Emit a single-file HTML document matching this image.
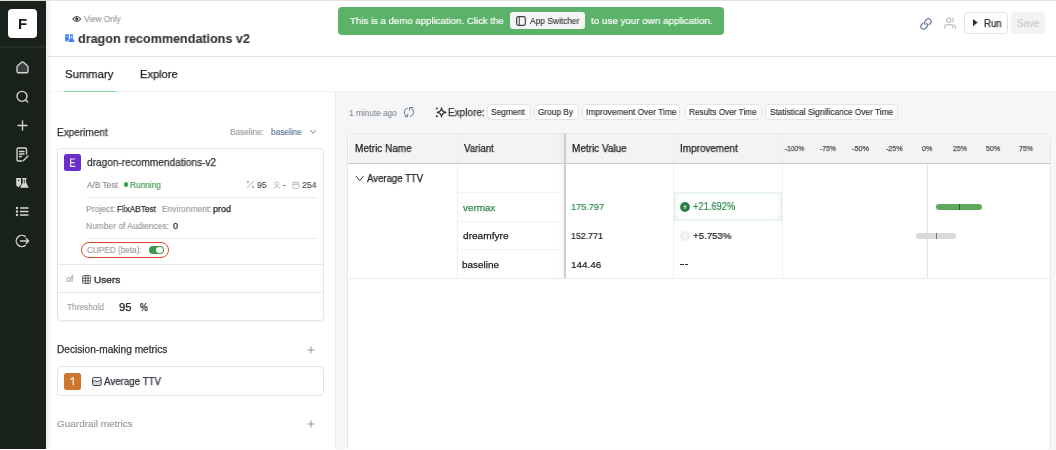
<!DOCTYPE html>
<html><head><meta charset="utf-8">
<style>
*{box-sizing:border-box;margin:0;padding:0}
html,body{width:1056px;height:450px;overflow:hidden;background:#fff;font-family:"Liberation Sans",sans-serif;color:#222}
.a{position:absolute;white-space:nowrap}
.t{position:absolute;white-space:nowrap;line-height:1;will-change:transform;-webkit-text-stroke:.25px currentColor}
#topline{left:0;top:0;width:1056px;height:1px;background:#e3e3e3}
#side{left:0;top:1px;width:45.6px;height:449px;background:#19211b;box-shadow:2px 0 6px rgba(0,0,0,.10)}
#fbox{will-change:transform;left:8px;top:9px;width:29px;height:29px;background:#fff;border-radius:4px;color:#1a1f1c;font-weight:bold;font-size:15px;text-align:center;line-height:29px}
#sidesep{left:0;top:46.4px;width:45.6px;height:1.2px;background:#252d27}
#hdr{left:46px;top:56px;width:1010px;height:1px;background:#dce1e4}
#tabline{left:46px;top:91px;width:1010px;height:1px;background:#f0f1f3}
#lpanelborder{left:335px;top:92px;width:1px;height:358px;background:#e6e9ed}
#rpanel{left:336px;top:92px;width:720px;height:358px;background:#f5f6f8}
.card{position:absolute;background:#fff;border:1px solid #e1e5ea;border-radius:4px}
.btn{will-change:transform;-webkit-text-stroke:.2px currentColor;position:absolute;height:16.2px;margin-top:.3px;background:#fff;border:1px solid #e2e4e8;border-radius:4px;font-size:8.3px;color:#333;line-height:14px;text-align:center}
</style></head><body>
<div class="a" id="topline"></div>
<div class="a" id="side"></div>
<div class="a" id="fbox">F</div>
<div class="a" id="sidesep"></div>

<!-- sidebar icons -->
<svg class="a" style="left:0;top:50px" width="45" height="210" viewBox="0 50 45 210" fill="none" stroke="#d3d6d4" stroke-width="1.35" stroke-linecap="round" stroke-linejoin="round">
  <path d="M17 67 Q17 66.3 17.6 65.8 L21.6 62.3 Q22.5 61.6 23.4 62.3 L27.4 65.8 Q28 66.3 28 67 V71.6 Q28 72.7 26.9 72.7 H18.1 Q17 72.7 17 71.6 Z" fill="#3a403c"/>
  <circle cx="22" cy="96.3" r="5"/><path d="M25.6 99.9 L27.8 102"/>
  <path d="M22.5 121 V130 M18 125.5 H27"/>
  <path d="M26.5 154 V149.2 Q26.5 148 25.3 148 H18.2 Q17 148 17 149.2 V159.8 Q17 161 18.2 161 H22 M19.5 151.5 H24 M19.5 154 H24 M19.5 156.5 H21.5 M23.5 160.5 L28 156"/>
  <path d="M16.2 178 H21 V184.3 L18.6 187.2 L16.2 185.6 Z" fill="#d3d6d4" stroke="none"/><circle cx="18.6" cy="180.5" r=".75" fill="#19211b" stroke="none"/><path d="M22 178 H26.7 V179 H26.1 V182.6 L28.8 187.8 H20 L22.7 182.6 V179 H22 Z" fill="#d3d6d4" stroke="none"/><path d="M24.3 179.8 V183" stroke="#19211b" stroke-width=".8"/>
  <path d="M20.5 208 H28 M20.5 211.5 H28 M20.5 215 H28"/>
  <circle cx="17" cy="208" r=".5" fill="#d8dbd9"/><circle cx="17" cy="211.5" r=".5" fill="#d8dbd9"/><circle cx="17" cy="215" r=".5" fill="#d8dbd9"/>
  <path d="M25.3 236.6 A5.6 5.6 0 1 0 25.3 245.4 M20.5 241 H28.6 M26.2 238.6 L28.6 241 L26.2 243.4"/>
</svg>

<!-- header -->
<div class="a" id="hdr"></div>
<svg class="a" style="left:72px;top:15px" width="9.5" height="8" viewBox="0 0 9.5 8"><path d="M.7 4 Q4.75 -.9 8.8 4 Q4.75 8.9 .7 4Z" fill="none" stroke="#444" stroke-width="1.1"/><circle cx="4.75" cy="4" r="1.7" fill="#444"/></svg>
<svg class="a" style="left:64.5px;top:33.6px" width="10" height="8.6" viewBox="16 177.6 13 10.6" preserveAspectRatio="none"><path d="M16.2 178 H21 V184.3 L18.6 187.2 L16.2 185.6 Z" fill="#3f80ee"/><circle cx="18.6" cy="180.5" r=".8" fill="#fff"/><path d="M22 178 H26.7 V179 H26.1 V182.6 L28.8 187.8 H20 L22.7 182.6 V179 H22 Z" fill="#3f80ee"/><path d="M24.3 179.8 V183" stroke="#fff" stroke-width=".9"/></svg>

<div class="a" style="left:337.8px;top:6.6px;width:386.4px;height:28.6px;background:#5db26a;border-radius:4px"></div>
<div class="a" style="left:510px;top:12px;width:75px;height:17px;background:#f4f5f4;border-radius:3px"></div>
<svg class="a" style="left:516px;top:16px" width="10" height="10" viewBox="0 0 10 10"><rect x=".7" y=".7" width="8.6" height="8.6" rx="1.5" fill="none" stroke="#444" stroke-width="1.2"/><path d="M3.3 1V9" stroke="#444" stroke-width="1"/></svg>

<svg class="a" style="left:918.5px;top:16.5px" width="14" height="14" viewBox="0 0 14 14" fill="none" stroke="#627696" stroke-width="1.15" stroke-linecap="round"><g transform="rotate(-45 7 7)"><path d="M5.6 4.3 H3.6 A2.7 2.7 0 0 0 3.6 9.7 H5.2 A2.7 2.7 0 0 0 7.9 7"/><path d="M8.4 9.7 H10.4 A2.7 2.7 0 0 0 10.4 4.3 H8.8 A2.7 2.7 0 0 0 6.1 7"/></g></svg>
<svg class="a" style="left:943px;top:17px" width="14" height="13" viewBox="0 0 14 13" fill="none" stroke="#bcbec2" stroke-width="1.05" stroke-linecap="round"><circle cx="5.8" cy="3.2" r="2.2"/><path d="M9.2 1.2 A2.3 2.3 0 0 1 9.2 5.3"/><path d="M1.6 11.2 V10.4 A2.8 2.8 0 0 1 4.4 7.6 H7.2 A2.8 2.8 0 0 1 10 10.4 V11.2"/><path d="M10.6 7.8 A2.6 2.6 0 0 1 12.6 10.4 V11.2"/></svg>
<div class="a" style="left:964px;top:12px;width:44px;height:22px;border:1px solid #dfe3e8;border-radius:4px;background:#fff"></div>
<svg class="a" style="left:973px;top:19.2px" width="6" height="8" viewBox="0 0 6 8"><path d="M0 0 L4.7 3.6 L0 7.2Z" fill="#2d3238"/></svg>
<div class="a" style="left:1011px;top:12px;width:34px;height:22px;border-radius:4px;background:#f3f3f3"></div>

<!-- tabs -->
<div class="a" id="tabline"></div>


<!-- left panel -->
<svg class="a" style="left:309px;top:129px" width="9" height="6" viewBox="0 0 9 6"><path d="M1.4 1.2 L4.1 4.3 L6.8 1.2" fill="none" stroke="#6a7f9a" stroke-width=".95"/></svg>

<div class="card" style="left:57px;top:148px;width:266.5px;height:172.5px;box-shadow:0 1px 2px rgba(0,0,0,.05)"></div>
<div class="a" style="left:58px;top:264px;width:265px;height:1px;background:#e6e9ec"></div>
<div class="a" style="left:58px;top:292px;width:265px;height:1px;background:#e6e9ec"></div>

<div class="a" style="left:64px;top:153.5px;width:17px;height:17.3px;background:#6a2fcb;border-radius:2.5px"></div><svg class="a" style="left:64px;top:153.5px" width="17" height="17" viewBox="0 0 17 17"><path d="M11.1 5 H6.6 V12.3 H11.1 M6.6 8.6 H10.6" stroke="#ece4f8" stroke-width="1.15" fill="none"/></svg>
<div class="a" style="left:123.9px;top:182.3px;width:4.5px;height:4.5px;border-radius:50%;background:#3d9b50"></div>

<svg class="a" style="left:246px;top:180px" width="9" height="9" viewBox="0 0 9 9" fill="none" stroke="#b0b0b0" stroke-width="1" stroke-linecap="round"><path d="M1.2 7.6 L7.6 1.2"/><circle cx="1.8" cy="2" r=".7" fill="#b0b0b0"/><circle cx="6.8" cy="7" r=".7" fill="#b0b0b0"/></svg>
<svg class="a" style="left:272.5px;top:180.5px" width="8" height="8" viewBox="0 0 8 8" fill="none" stroke="#b8b8b8" stroke-width=".9"><circle cx="3.8" cy="2.7" r="1.8"/><path d="M.7 7.3 q3-3.3 6.3 0"/></svg>
<div class="a" style="left:282.8px;top:184.5px;width:3px;height:1px;background:#888"></div>
<svg class="a" style="left:291.5px;top:180.5px" width="8" height="8" viewBox="0 0 8 8" fill="none" stroke="#b8b8b8" stroke-width=".9"><rect x=".8" y="1.6" width="6.2" height="5.8" rx=".8"/><path d="M.8 3.4h6.2M2.6 .5v1.8M5.2 .5v1.8"/></svg>

<div class="a" style="left:87px;top:196.5px;width:230px;height:1px;background:#ececec"></div>
<div class="a" style="left:87px;top:238px;width:230px;height:1px;background:#ececec"></div>

<div class="a" style="left:81.4px;top:241.9px;width:87.6px;height:16px;border:1.9px solid #e2492c;border-radius:8px"></div>
<div class="a" style="left:149.4px;top:246px;width:14.6px;height:8.4px;border-radius:4.2px;background:#3e9a52"></div>
<div class="a" style="left:156.4px;top:247.1px;width:6.3px;height:6.3px;border-radius:50%;background:#fff"></div>

<svg class="a" style="left:81.5px;top:274.5px" width="9.5" height="9" viewBox="0 0 9.5 9" fill="none" stroke="#4a4f55" stroke-width=".9"><rect x=".6" y=".6" width="8.2" height="7.8" rx="1"/><path d="M.6 3.2h8.2M.6 5.8h8.2M3.3 .6v7.8M6 .6v7.8"/></svg>


<svg class="a" style="left:307px;top:346px" width="8" height="8" viewBox="0 0 8 8"><path d="M4 .6v6.8M.6 4h6.8" stroke="#858585" stroke-width=".85"/></svg>
<div class="card" style="left:57px;top:366px;width:266.5px;height:30px"></div>
<div class="a" style="left:63.8px;top:373px;width:17.1px;height:16.6px;background:#cd752c;border-radius:2.5px"></div><svg class="a" style="left:63.8px;top:373px" width="17" height="17" viewBox="0 0 17 17"><path d="M9.3 4.6 V11.7 M9.3 4.6 L6.9 6.3" stroke="#f6e9dc" stroke-width="1.35" fill="none" stroke-linecap="round" stroke-linejoin="round"/></svg>
<svg class="a" style="left:91.5px;top:377px" width="10" height="9" viewBox="0 0 10 9"><path d="M1 4.6 Q2.5 3 3.6 3.9 Q4.8 5.2 6.2 4.3 Q7.4 3.4 8.8 3.2 V8 H1Z" fill="#d5d7db"/><rect x=".6" y=".6" width="8.6" height="7.9" rx="1.3" fill="none" stroke="#3a3e44" stroke-width="1"/><path d="M1 4.6 Q2.5 3 3.6 3.9 Q4.8 5.2 6.2 4.3 Q7.4 3.4 8.8 3.2" fill="none" stroke="#3a3e44" stroke-width=".9"/></svg>

<svg class="a" style="left:307px;top:420px" width="8" height="8" viewBox="0 0 8 8"><path d="M4 .6v6.8M.6 4h6.8" stroke="#858585" stroke-width=".85"/></svg>
<div class="a" id="lpanelborder"></div>
<div class="a" id="rpanel"></div>
<div class="a" style="left:64px;top:90.8px;width:52px;height:1.5px;background:#84dc9b"></div>


<!-- right panel -->
<svg class="a" style="left:400px;top:104px" width="16" height="16" viewBox="400 104 16 16" fill="none" stroke="#6a829b" stroke-width="1.0" stroke-linecap="round" stroke-linejoin="round"><path d="M407.5 108.1 A4.4 4.4 0 0 0 406.9 116.4"/><path d="M407.7 114.1 V116.6 H405.1"/><path d="M410.3 116.5 A4.4 4.4 0 0 0 410.9 108.2"/><path d="M409.5 110.4 V107.5 H412.6"/></svg>
<svg class="a" style="left:434px;top:106px" width="14" height="13" viewBox="434 106 14 13"><path d="M441.5 107.9 Q441.9 111.9 446 112.35 Q441.9 112.8 441.5 116.8 Q441.1 112.8 437.2 112.35 Q441.1 111.9 441.5 107.9Z" fill="none" stroke="#333" stroke-width="1.2" stroke-linejoin="round"/><circle cx="436.8" cy="108.4" r="1" fill="#333"/><circle cx="436.8" cy="116.3" r="1" fill="#333"/></svg>
<div class="btn" style="left:486.6px;top:104px;width:43.5px"></div>
<div class="btn" style="left:533.5px;top:104px;width:44.5px"></div>
<div class="btn" style="left:582px;top:104px;width:98px"></div>
<div class="btn" style="left:684.5px;top:104px;width:77px"></div>
<div class="btn" style="left:765.4px;top:104px;width:132.6px"></div>

<div class="a" style="left:347px;top:133px;width:703.5px;height:330px;background:#fff;border:1px solid #e6e6e6;border-radius:6px"></div>
<div class="a" style="left:348.5px;top:134px;width:701px;height:29px;background:#f3f3f3;border-radius:5px 5px 0 0"></div>
<div class="a" style="left:456.8px;top:134px;width:1px;height:144px;background:#eeeeee"></div>
<div class="a" style="left:673.3px;top:134px;width:1px;height:144px;background:#efefef"></div>
<div class="a" style="left:782.3px;top:134px;width:1px;height:144px;background:#efefef"></div>
<div class="a" style="left:558px;top:134px;width:6px;height:144px;background:linear-gradient(90deg,rgba(0,0,0,0),rgba(0,0,0,.03))"></div>
<div class="a" style="left:564px;top:134px;width:1.6px;height:144px;background:#cdcdcd"></div>
<div class="a" style="left:348.5px;top:278px;width:701px;height:1px;background:#ececec"></div>
<div class="a" style="left:348px;top:162.6px;width:702px;height:1.4px;background:#c9c9c9"></div>
<div class="a" style="left:457.8px;top:191.5px;width:106px;height:1px;background:#f3f3f3"></div>
<div class="a" style="left:457.8px;top:220.8px;width:106px;height:1px;background:#f3f3f3"></div>
<div class="a" style="left:457.8px;top:248.8px;width:106px;height:1px;background:#f3f3f3"></div>


<svg class="a" style="left:354.5px;top:175px" width="10" height="7" viewBox="0 0 10 7"><path d="M1 1 L4.8 5.6 L8.6 1" fill="none" stroke="#333" stroke-width="1"/></svg>


<div class="a" style="left:673.8px;top:192px;width:108.6px;height:28.8px;background:#fff;border:1px solid #e4f1e4;box-shadow:inset 0 0 5px rgba(91,170,95,.18)"></div>
<svg class="a" style="left:680px;top:202px" width="10" height="10" viewBox="0 0 10 10"><circle cx="5" cy="5" r="4.9" fill="#2c8049"/><path d="M5 3 L7 5 H5.7 V7 H4.3 V5 H3Z" fill="#fff" opacity=".7"/></svg>
<svg class="a" style="left:680px;top:231px" width="10" height="10" viewBox="0 0 10 10"><circle cx="5" cy="5" r="4.6" fill="#f0f0f0" stroke="#e6e6e6" stroke-width=".7"/><path d="M5 3 L7 5 H5.7 V7 H4.3 V5 H3Z" fill="#fafafa"/></svg>
<div class="a" style="left:680.3px;top:263.5px;width:3.4px;height:1px;background:#333"></div>
<div class="a" style="left:684.8px;top:263.5px;width:3.4px;height:1px;background:#333"></div>

<div class="a" style="left:927px;top:164px;width:1px;height:114px;background:#dde3f7"></div>
<div class="a" style="left:936px;top:203.7px;width:45.7px;height:6.3px;border-radius:3.2px;background:#5fa95c"></div>
<div class="a" style="left:959.2px;top:203.7px;width:1px;height:6.3px;background:#2e5b2d"></div>
<div class="a" style="left:915.6px;top:232.7px;width:40.4px;height:6px;border-radius:3px;background:#d9d9d9"></div>
<div class="a" style="left:936px;top:232.7px;width:1px;height:6px;background:#777"></div>
<div class="t" style="left:83.90px;top:15.00px;font-size:8.78px;color:#9b9b9b;transform:scaleX(0.932);transform-origin:0 0;-webkit-text-stroke:.15px currentColor;">View Only</div>
<div class="t" style="left:78.30px;top:33.00px;font-size:12.93px;color:#36393e;font-weight:bold;transform:scaleX(0.973);transform-origin:0 0;-webkit-text-stroke:.15px currentColor;">dragon recommendations v2</div>
<div class="t" style="left:349.71px;top:16.00px;font-size:9.89px;color:#fff;transform:scaleX(0.976);transform-origin:0 0;-webkit-text-stroke:.18px #fff;">This is a demo application. Click the</div>
<div class="t" style="left:529.80px;top:17.00px;font-size:8.47px;color:#333;transform:scaleX(0.990);transform-origin:0 0;-webkit-text-stroke:.12px currentColor;">App Switcher</div>
<div class="t" style="left:591.40px;top:16.00px;font-size:9.89px;color:#fff;transform:scaleX(0.994);transform-origin:0 0;-webkit-text-stroke:.18px #fff;">to use your own application.</div>
<div class="t" style="left:984.13px;top:19.00px;font-size:10.01px;color:#2d3238;transform:scaleX(0.959);transform-origin:0 0;">Run</div>
<div class="t" style="left:1017.11px;top:19.00px;font-size:10.18px;color:#c4c4c4;transform:scaleX(0.963);transform-origin:0 0;-webkit-text-stroke:.15px currentColor;">Save</div>
<div class="t" style="left:65.25px;top:68.00px;font-size:11.6px;color:#222;transform:scaleX(0.976);transform-origin:0 0;">Summary</div>
<div class="t" style="left:140.31px;top:69.00px;font-size:11.51px;color:#222;transform:scaleX(0.968);transform-origin:0 0;">Explore</div>
<div class="t" style="left:56.90px;top:128.00px;font-size:10.37px;color:#2f3236;transform:scaleX(0.968);transform-origin:0 0;">Experiment</div>
<div class="t" style="left:230.04px;top:128.00px;font-size:8.68px;color:#9a9a9a;transform:scaleX(0.952);transform-origin:0 0;-webkit-text-stroke:.15px currentColor;">Baseline:</div>
<div class="t" style="left:271.40px;top:128.00px;font-size:8.45px;color:#5a7394;transform:scaleX(0.978);transform-origin:0 0;-webkit-text-stroke:.15px currentColor;">baseline</div>
<div class="t" style="left:86.70px;top:158.00px;font-size:10.25px;color:#333;transform:scaleX(0.985);transform-origin:0 0;">dragon-recommendations-v2</div>
<div class="t" style="left:87.00px;top:181.00px;font-size:8.7px;color:#8c8c8c;transform:scaleX(0.953);transform-origin:0 0;-webkit-text-stroke:.15px currentColor;">A/B Test</div>
<div class="t" style="left:130.44px;top:181.00px;font-size:8.71px;color:#3d9b50;transform:scaleX(0.953);transform-origin:0 0;-webkit-text-stroke:.15px currentColor;">Running</div>
<div class="t" style="left:256.65px;top:181.00px;font-size:9.05px;color:#4a4a4a;transform:scaleX(0.960);transform-origin:0 0;-webkit-text-stroke:.12px currentColor;">95</div>
<div class="t" style="left:301.86px;top:181.00px;font-size:9.1px;color:#4a4a4a;transform:scaleX(0.966);transform-origin:0 0;-webkit-text-stroke:.12px currentColor;">254</div>
<div class="t" style="left:86.30px;top:205.00px;font-size:9.05px;color:#999;transform:scaleX(0.960);transform-origin:0 0;-webkit-text-stroke:.15px currentColor;">Project:</div>
<div class="t" style="left:117.44px;top:205.00px;font-size:9.05px;color:#2a2a2a;transform:scaleX(0.911);transform-origin:0 0;">FlixABTest</div>
<div class="t" style="left:162.13px;top:205.00px;font-size:9.05px;color:#999;transform:scaleX(0.930);transform-origin:0 0;-webkit-text-stroke:.15px currentColor;">Environment:</div>
<div class="t" style="left:213.46px;top:205.00px;font-size:9.05px;color:#2a2a2a;">prod</div>
<div class="t" style="left:86.32px;top:222.00px;font-size:8.86px;color:#999;transform:scaleX(0.954);transform-origin:0 0;-webkit-text-stroke:.15px currentColor;">Number of Audiences:</div>
<div class="t" style="left:172.82px;top:222.00px;font-size:8.86px;color:#2a2a2a;transform:scaleX(1.037);transform-origin:0 0;">0</div>
<div class="t" style="left:86.69px;top:246.00px;font-size:8.38px;color:#9c9c9c;transform:scaleX(0.979);transform-origin:0 0;-webkit-text-stroke:.15px currentColor;">CUPED (beta):</div>
<div class="t" style="left:66.35px;top:275.00px;font-size:9.19px;color:#999;transform:scaleX(0.957);transform-origin:0 0;-webkit-text-stroke:.15px currentColor;">of</div>
<div class="t" style="left:93.99px;top:275.00px;font-size:9.9px;color:#3a3e44;transform:scaleX(1.018);transform-origin:0 0;-webkit-text-stroke:.45px currentColor;">Users</div>
<div class="t" style="left:66.93px;top:303.00px;font-size:9.19px;color:#9c9c9c;transform:scaleX(0.906);transform-origin:0 0;-webkit-text-stroke:.15px currentColor;">Threshold</div>
<div class="t" style="left:119.05px;top:303.00px;font-size:10.2px;color:#222;transform:scaleX(1.107);transform-origin:0 0;">95</div>
<div class="t" style="left:139.54px;top:303.00px;font-size:10.2px;color:#222;transform:scaleX(0.850);transform-origin:0 0;">%</div>
<div class="t" style="left:57.19px;top:345.00px;font-size:10.15px;color:#2f3236;">Decision-making metrics</div>
<div class="t" style="left:104.30px;top:377.00px;font-size:10.0px;color:#2c3038;transform:scaleX(0.972);transform-origin:0 0;">Average TTV</div>
<div class="t" style="left:56.90px;top:419.00px;font-size:9.96px;color:#9a9a9a;-webkit-text-stroke:.15px currentColor;">Guardrail metrics</div>
<div class="t" style="left:349.42px;top:109.00px;font-size:9.16px;color:#8a8f96;transform:scaleX(0.904);transform-origin:0 0;-webkit-text-stroke:.15px currentColor;">1 minute ago</div>
<div class="t" style="left:447.90px;top:107.00px;font-size:10.56px;color:#333;transform:scaleX(0.947);transform-origin:0 0;">Explore:</div>
<div class="t" style="left:491.36px;top:108.00px;font-size:8.83px;color:#333;transform:scaleX(0.951);transform-origin:0 0;-webkit-text-stroke:.18px currentColor;">Segment</div>
<div class="t" style="left:538.19px;top:108.00px;font-size:8.83px;color:#333;transform:scaleX(0.936);transform-origin:0 0;-webkit-text-stroke:.18px currentColor;">Group By</div>
<div class="t" style="left:585.64px;top:108.00px;font-size:8.83px;color:#333;transform:scaleX(0.956);transform-origin:0 0;-webkit-text-stroke:.18px currentColor;">Improvement Over Time</div>
<div class="t" style="left:688.94px;top:108.00px;font-size:8.83px;color:#333;transform:scaleX(0.931);transform-origin:0 0;-webkit-text-stroke:.18px currentColor;">Results Over Time</div>
<div class="t" style="left:769.87px;top:108.00px;font-size:8.83px;color:#333;transform:scaleX(0.940);transform-origin:0 0;-webkit-text-stroke:.18px currentColor;">Statistical Significance Over Time</div>
<div class="t" style="left:354.70px;top:144.00px;font-size:10.07px;color:#222;transform:scaleX(0.993);transform-origin:0 0;">Metric Name</div>
<div class="t" style="left:463.90px;top:144.00px;font-size:10.07px;color:#222;transform:scaleX(0.956);transform-origin:0 0;">Variant</div>
<div class="t" style="left:571.70px;top:144.00px;font-size:10.07px;color:#222;transform:scaleX(0.990);transform-origin:0 0;">Metric Value</div>
<div class="t" style="left:679.91px;top:144.00px;font-size:10.07px;color:#222;transform:scaleX(0.985);transform-origin:0 0;">Improvement</div>
<div class="t" style="left:784.63px;top:146.00px;font-size:7.13px;color:#555;transform:scaleX(0.930);transform-origin:0 0;">-100%</div>
<div class="t" style="left:819.53px;top:146.00px;font-size:7.13px;color:#555;transform:scaleX(0.960);transform-origin:0 0;">-75%</div>
<div class="t" style="left:852.11px;top:146.00px;font-size:7.13px;color:#555;transform:scaleX(1.022);transform-origin:0 0;">-50%</div>
<div class="t" style="left:885.62px;top:146.00px;font-size:7.13px;color:#555;">-25%</div>
<div class="t" style="left:922.09px;top:146.00px;font-size:7.13px;color:#555;transform:scaleX(0.992);transform-origin:0 0;">0%</div>
<div class="t" style="left:953.15px;top:146.00px;font-size:7.13px;color:#555;transform:scaleX(0.970);transform-origin:0 0;">25%</div>
<div class="t" style="left:986.42px;top:146.00px;font-size:7.13px;color:#555;transform:scaleX(0.987);transform-origin:0 0;">50%</div>
<div class="t" style="left:1019.46px;top:146.00px;font-size:7.13px;color:#555;transform:scaleX(0.963);transform-origin:0 0;">75%</div>
<div class="t" style="left:367.10px;top:174.00px;font-size:10.13px;color:#222;transform:scaleX(0.946);transform-origin:0 0;">Average TTV</div>
<div class="t" style="left:462.90px;top:203.00px;font-size:9.92px;color:#2f8a4e;transform:scaleX(0.993);transform-origin:0 0;">vermax</div>
<div class="t" style="left:462.60px;top:231.00px;font-size:9.92px;color:#222;transform:scaleX(1.021);transform-origin:0 0;">dreamfyre</div>
<div class="t" style="left:462.41px;top:260.00px;font-size:9.92px;color:#222;">baseline</div>
<div class="t" style="left:571.16px;top:202.00px;font-size:9.8px;color:#2f8a4e;transform:scaleX(0.933);transform-origin:0 0;-webkit-text-stroke:.2px currentColor;">175.797</div>
<div class="t" style="left:571.38px;top:231.00px;font-size:9.7px;color:#222;transform:scaleX(0.911);transform-origin:0 0;-webkit-text-stroke:.2px currentColor;">152.771</div>
<div class="t" style="left:571.31px;top:260.00px;font-size:9.8px;color:#222;transform:scaleX(1.006);transform-origin:0 0;-webkit-text-stroke:.2px currentColor;">144.46</div>
<div class="t" style="left:693.03px;top:202.00px;font-size:10.0px;color:#2f8a4e;transform:scaleX(0.932);transform-origin:0 0;-webkit-text-stroke:.2px currentColor;">+21.692%</div>
<div class="t" style="left:693.01px;top:231.00px;font-size:9.8px;color:#222;transform:scaleX(0.987);transform-origin:0 0;-webkit-text-stroke:.2px currentColor;">+5.753%</div>
<div class="a" style="left:0;top:449px;width:1056px;height:1px;background:#fdfdfd"></div>
</body></html>
